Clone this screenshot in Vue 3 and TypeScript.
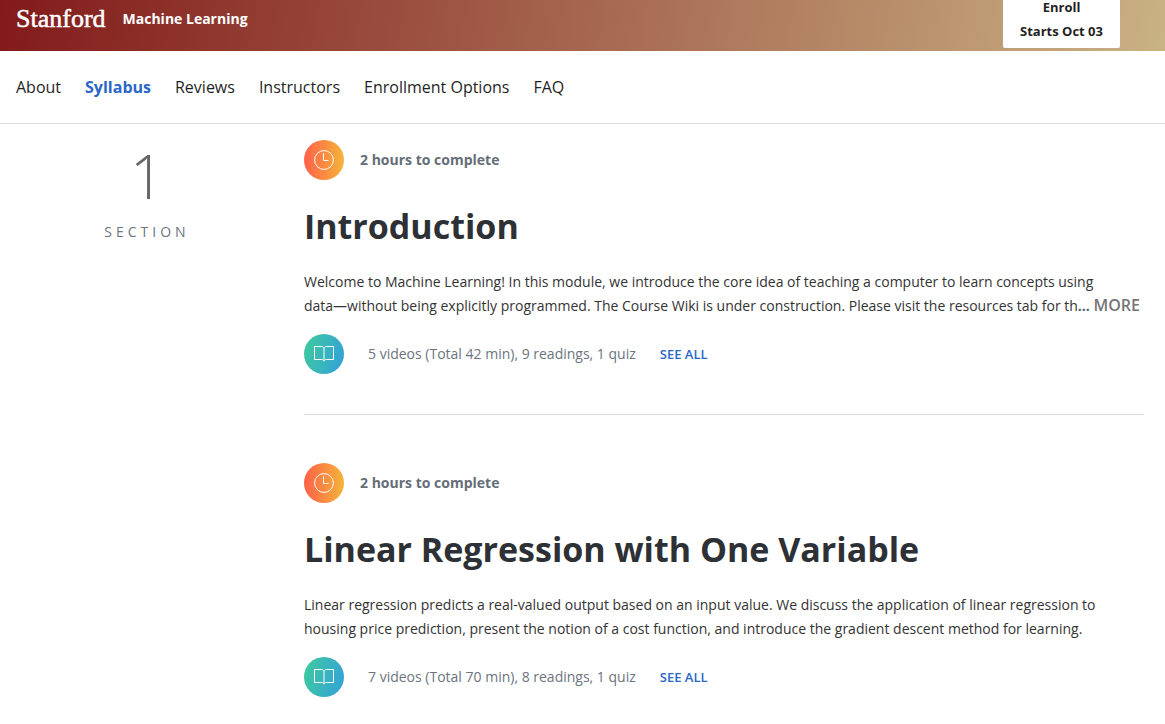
<script setup lang="ts">
interface Week {
  id: number
  hours: string
  title: string
  text: string
  truncated: boolean
  summary: string
}

const links: string[] = ['About', 'Syllabus', 'Reviews', 'Instructors', 'Enrollment Options', 'FAQ']
const active = 'Syllabus'

const weeks: Week[] = [
  {
    id: 1,
    hours: '2 hours to complete',
    title: 'Introduction',
    text: 'Welcome to Machine Learning! In this module, we introduce the core idea of teaching a computer to learn concepts using data\u2060—\u2060without being explicitly programmed. The Course Wiki is under construction. Please visit the resources tab for th',
    truncated: true,
    summary: '5 videos (Total 42 min), 9 readings, 1 quiz',
  },
  {
    id: 2,
    hours: '2 hours to complete',
    title: 'Linear Regression with One Variable',
    text: 'Linear regression predicts a real-valued output based on an input value. We discuss the application of linear regression to housing price prediction, present the notion of a cost function, and introduce the gradient descent method for learning.',
    truncated: false,
    summary: '7 videos (Total 70 min), 8 readings, 1 quiz',
  },
]
</script>

<template>
  <div class="page">
    <header class="banner">
      <a class="logo" href="#">Stanford</a>
      <span class="course">Machine Learning</span>
      <button class="enroll" type="button">
        <span>Enroll</span>
        <span>Starts Oct 03</span>
      </button>
    </header>

    <nav class="tabs">
      <a v-for="link in links" :key="link" href="#" :class="{ active: link === active }">{{ link }}</a>
    </nav>

    <main class="syllabus">
      <aside class="section">
        <span class="number">1</span>
        <span class="label">SECTION</span>
      </aside>

      <div class="weeks">
        <section v-for="week in weeks" :key="week.id" class="week">
          <div class="row">
            <span class="badge clock">
              <svg width="20" height="20" viewBox="0 0 20 20" aria-hidden="true">
                <circle cx="10" cy="10" r="9.4" />
                <path d="M9.5 3.2V10.5H14.5" />
              </svg>
            </span>
            <span class="hours">{{ week.hours }}</span>
          </div>
          <h2>{{ week.title }}</h2>
          <p>{{ week.text }}<template v-if="week.truncated"><span class="dots">...</span> <button class="more" type="button">MORE</button></template></p>
          <div class="row">
            <span class="badge book">
              <svg width="20" height="16" viewBox="0 0 20 16" aria-hidden="true">
                <path d="M10 2.5C9.6 1.1 8.7.5 7.5.5H.5V13.5H7.5C8.7 13.5 9.7 14 10 15.2C10.3 14 11.3 13.5 12.5 13.5H19.5V.5H12.5C11.3.5 10.4 1.1 10 2.5ZM10 2.5V15" />
              </svg>
            </span>
            <span class="summary">{{ week.summary }}</span>
            <button class="see" type="button">SEE ALL</button>
          </div>
        </section>
      </div>
    </main>
  </div>
</template>

<style>
body {
  margin: 0;
  background: #fff;
}
</style>

<style scoped>
.page {
  font-family: "Open Sans", "Noto Sans", sans-serif;
  color: #1f1f1f;
}

a {
  text-decoration: none;
  color: inherit;
}

button {
  font-family: inherit;
  border: 0;
  margin: 0;
  padding: 0;
  background: none;
  cursor: pointer;
}

.banner {
  display: flex;
  align-items: flex-end;
  height: 48px;
  padding: 0 45px 3px 16px;
  overflow: hidden;
  color: #fff;
  background: linear-gradient(100deg, #821a1a 0%, #c9b284 100%);
}

.logo {
  font: 26px/32px "Liberation Serif", serif;
  -webkit-text-stroke: 0.5px #fff;
  padding-bottom: 13px;
}

.course {
  margin-left: 17px;
  font-size: 14px;
  font-weight: 700;
  line-height: 24px;
  padding-bottom: 17px;
}

.enroll {
  display: flex;
  flex-direction: column;
  align-items: center;
  flex: none;
  margin-left: auto;
  padding: 5px 17px;
  border-radius: 2px;
  background: #fff;
  color: #1f1f1f;
  font-size: 13px;
  font-weight: 700;
  line-height: 24px;
}

.tabs {
  display: flex;
  gap: 24px;
  padding: 24px 16px;
  border-bottom: 1px solid #dcdcdc;
  font-size: 16px;
  line-height: 24px;
}

.tabs .active {
  color: #2a67c9;
  font-weight: 700;
}

.syllabus {
  display: flex;
}

.section {
  display: flex;
  flex-direction: column;
  align-items: center;
  flex: none;
  width: 294px;
  padding-top: 16px;
  margin-right: 10px;
}

.number {
  font-size: 60px;
  font-weight: 300;
  line-height: 72px;
  color: #666;
}

.label {
  padding-top: 4px;
  font-size: 14px;
  line-height: 32px;
  letter-spacing: 4px;
  color: #6b7480;
}

.weeks {
  flex: 1;
  margin-right: 21px;
}

.week {
  padding-top: 48px;
  padding-bottom: 40px;
  border-bottom: 1px solid #dcdcdc;
}

.week:first-child {
  padding-top: 16px;
}

.week:last-child {
  padding-bottom: 16px;
  border-bottom: 0;
}

.row {
  display: flex;
  align-items: center;
}

.badge {
  display: flex;
  align-items: center;
  justify-content: center;
  width: 40px;
  height: 40px;
  border-radius: 50%;
}

.badge svg {
  fill: none;
  stroke: #fff;
  stroke-width: 1;
}

.clock {
  background: linear-gradient(90deg, #ff6149, #f5b43a);
}

.book {
  background: linear-gradient(105deg, #3fcb9c, #33a0dc);
}

.hours {
  margin-left: 16px;
  font-size: 14px;
  font-weight: 700;
  line-height: 24px;
  color: #656e78;
}

h2 {
  margin: 22px 0 20px;
  font-size: 34px;
  font-weight: 700;
  line-height: 48px;
  color: #2d3135;
}

p {
  margin: 0 0 16px;
  font-size: 14px;
  line-height: 24px;
  color: #333;
}

.dots {
  font-weight: 700;
  color: #525f73;
}

.more {
  font-size: 16px;
  font-weight: 600;
  line-height: 20px;
  color: #757575;
}

.summary {
  margin-left: 24px;
  font-size: 14px;
  line-height: 24px;
  color: #6b7480;
}

.see {
  margin-left: 24px;
  font-size: 13px;
  font-weight: 600;
  line-height: 24px;
  color: #2a67c9;
}
</style>
